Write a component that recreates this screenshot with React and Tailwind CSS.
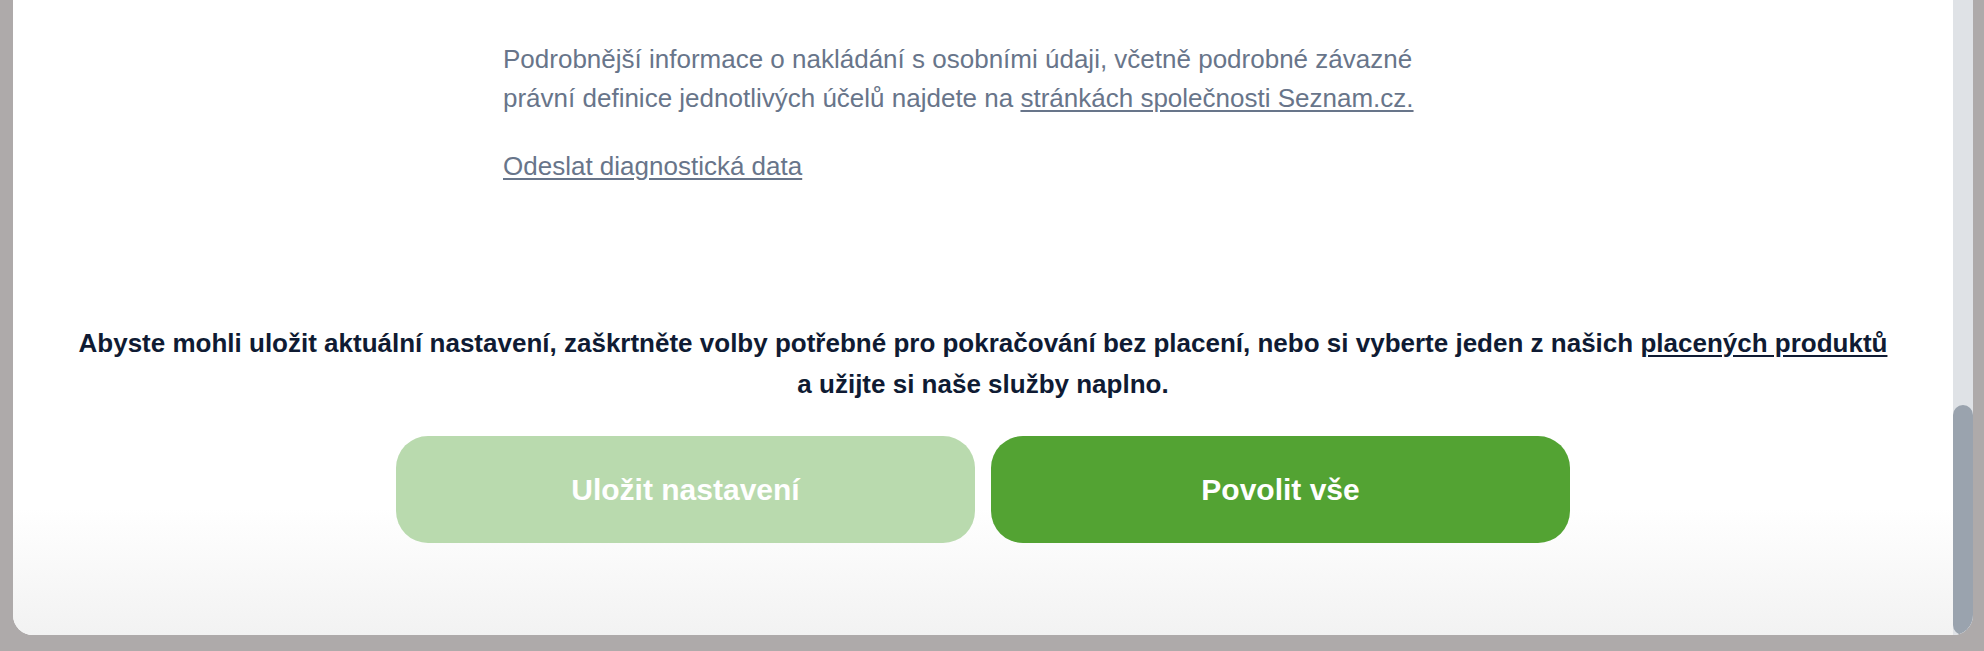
import React from 'react';

const App = () => {
  return (
    <div className="h-[651px] w-[1984px] overflow-hidden bg-[#aeaaaa] pl-[13px] pr-[11px] pb-[16px] font-['Liberation_Sans',Arial,sans-serif]">
      <div className="flex h-full overflow-hidden rounded-b-[20px] bg-white">
        <div className="flex-1 bg-linear-to-b from-white from-80% to-[#f2f2f2]">
          <div className="mx-auto w-[960px] pt-[40px] text-[26px] leading-[39px] text-[#68758a]">
            <p>
              Podrobnější informace o nakládání s osobními údaji, včetně podrobné závazné právní definice jednotlivých účelů najdete na{' '}
              <a href="#" className="underline underline-offset-[3px]">stránkách společnosti Seznam.cz.</a>
            </p>
            <p className="mt-[29px]">
              <a href="#" className="underline underline-offset-[3px]">Odeslat diagnostická data</a>
            </p>
          </div>

          <p className="mt-[137px] text-center text-[26px] font-bold leading-[41px] text-[#0f1b33]">
            Abyste mohli uložit aktuální nastavení, zaškrtněte volby potřebné pro pokračování bez placení, nebo si vyberte jeden z našich{' '}
            <a href="#" className="underline underline-offset-[3px]">placených produktů</a>
            <br />
            a užijte si naše služby naplno.
          </p>

          <div className="mt-[31px] flex justify-center gap-[16px]">
            <button className="h-[107px] w-[579px] rounded-[32px] bg-[#b9daae] text-[30px] font-bold text-white">
              Uložit nastavení
            </button>
            <button className="h-[107px] w-[579px] rounded-[32px] bg-[#53a333] text-[30px] font-bold text-white">
              Povolit vše
            </button>
          </div>
        </div>

        <div className="flex w-[20px] flex-col justify-end bg-[#dfe2e6]">
          <div className="h-[230px] rounded-full bg-[#9aa3ae]" />
        </div>
      </div>
    </div>
  );
};

export default App;
